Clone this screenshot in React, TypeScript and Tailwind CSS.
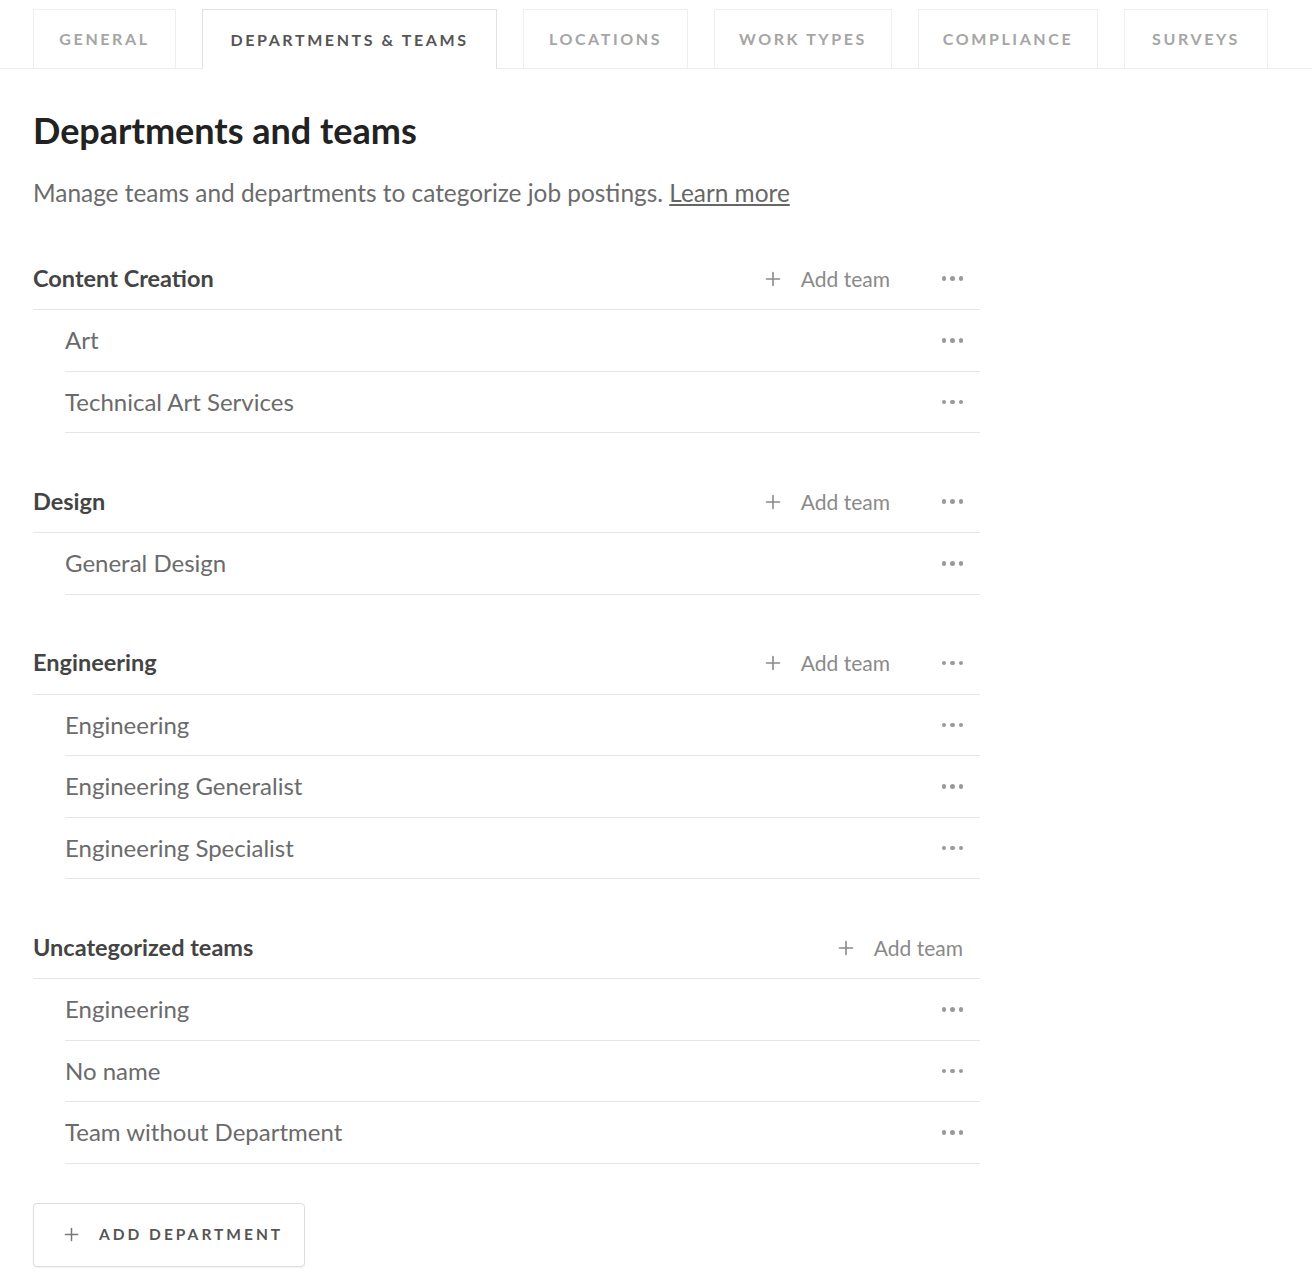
import React from "react";

const tabs = [
  { label: "General", w: 143 },
  { label: "Departments & Teams", w: 295, active: true },
  { label: "Locations", w: 165 },
  { label: "Work Types", w: 178 },
  { label: "Compliance", w: 180 },
  { label: "Surveys", w: 144 },
];

const sections = [
  { name: "Content Creation", teams: ["Art", "Technical Art Services"], dots: true },
  { name: "Design", teams: ["General Design"], dots: true },
  { name: "Engineering", teams: ["Engineering", "Engineering Generalist", "Engineering Specialist"], dots: true },
  { name: "Uncategorized teams", teams: ["Engineering", "No name", "Team without Department"], dots: false },
];

function Dots() {
  return (
    <div className="flex items-center gap-[4px] w-[25px] justify-center">
      <span className="w-[4.5px] h-[4.5px] rounded-full bg-[#999]" />
      <span className="w-[4.5px] h-[4.5px] rounded-full bg-[#999]" />
      <span className="w-[4.5px] h-[4.5px] rounded-full bg-[#999]" />
    </div>
  );
}

function Plus({ size = 16, color = "#8a8a8a" }: { size?: number; color?: string }) {
  return (
    <svg width={size} height={size} viewBox="0 0 16 16" fill="none">
      <path d="M8 1.5V14.5M1.5 8H14.5" stroke={color} strokeWidth="1.6" strokeLinecap="round" />
    </svg>
  );
}

export default function App() {
  return (
    <div className="min-h-screen bg-white" style={{ fontFamily: "Lato, 'Open Sans', sans-serif" }}>
      <div className="flex gap-[26px] pt-[9px] pl-[33px] border-b border-[#ececec]">
        {tabs.map((t) => (
          <div
            key={t.label}
            style={{ width: t.w }}
            className={
              "h-[59px] flex items-center justify-center uppercase font-bold text-[16px] tracking-[2.6px] border border-b-0 " +
              (t.active
                ? "border-[#e2e2e2] text-[#555] bg-white -mb-px h-[60px]"
                : "border-[#eeeeee] text-[#a5a5a5]")
            }
          >
            {t.label}
          </div>
        ))}
      </div>

      <div className="pl-[33px] w-[980px]">
        <h1 className="mt-[41px] text-[36px] leading-[40px] font-bold text-[#222]">Departments and teams</h1>
        <p className="mt-[28px] text-[24.4px] leading-[30px] text-[#6b6b6b]">
          Manage teams and departments to categorize job postings.{" "}
          <span className="underline text-[#666]">Learn more</span>
        </p>

        <div className="mt-[40px] flex flex-col gap-[38px]">
          {sections.map((s) => (
            <div key={s.name}>
              <div className="h-[62px] flex items-center border-b border-[#e6e6e6]">
                <div className="flex-1 text-[23.5px] font-bold text-[#444]">{s.name}</div>
                <div className="flex items-center gap-[20px] text-[#8a8a8a] text-[21px]">
                  <Plus />
                  <span>Add team</span>
                </div>
                {s.dots ? (
                  <div className="ml-[50px] mr-[15px]">
                    <Dots />
                  </div>
                ) : (
                  <div className="w-[17px]" />
                )}
              </div>
              {s.teams.map((t, i) => (
                <div key={i} className="ml-[32px] h-[61.5px] flex items-center border-b border-[#e6e6e6]">
                  <div className="flex-1 text-[24px] text-[#6b6b6b]">{t}</div>
                  <div className="mr-[15px]">
                    <Dots />
                  </div>
                </div>
              ))}
            </div>
          ))}
        </div>

        <button className="mt-[39px] w-[272px] h-[64px] flex items-center gap-[20px] pl-[30px] border border-[#dedede] rounded-[4px] shadow-[0_1px_2px_rgba(0,0,0,0.06)] bg-white">
          <Plus size={15} color="#777" />
          <span className="uppercase font-bold text-[15.5px] tracking-[3px] text-[#555]">Add department</span>
        </button>
      </div>
    </div>
  );
}
